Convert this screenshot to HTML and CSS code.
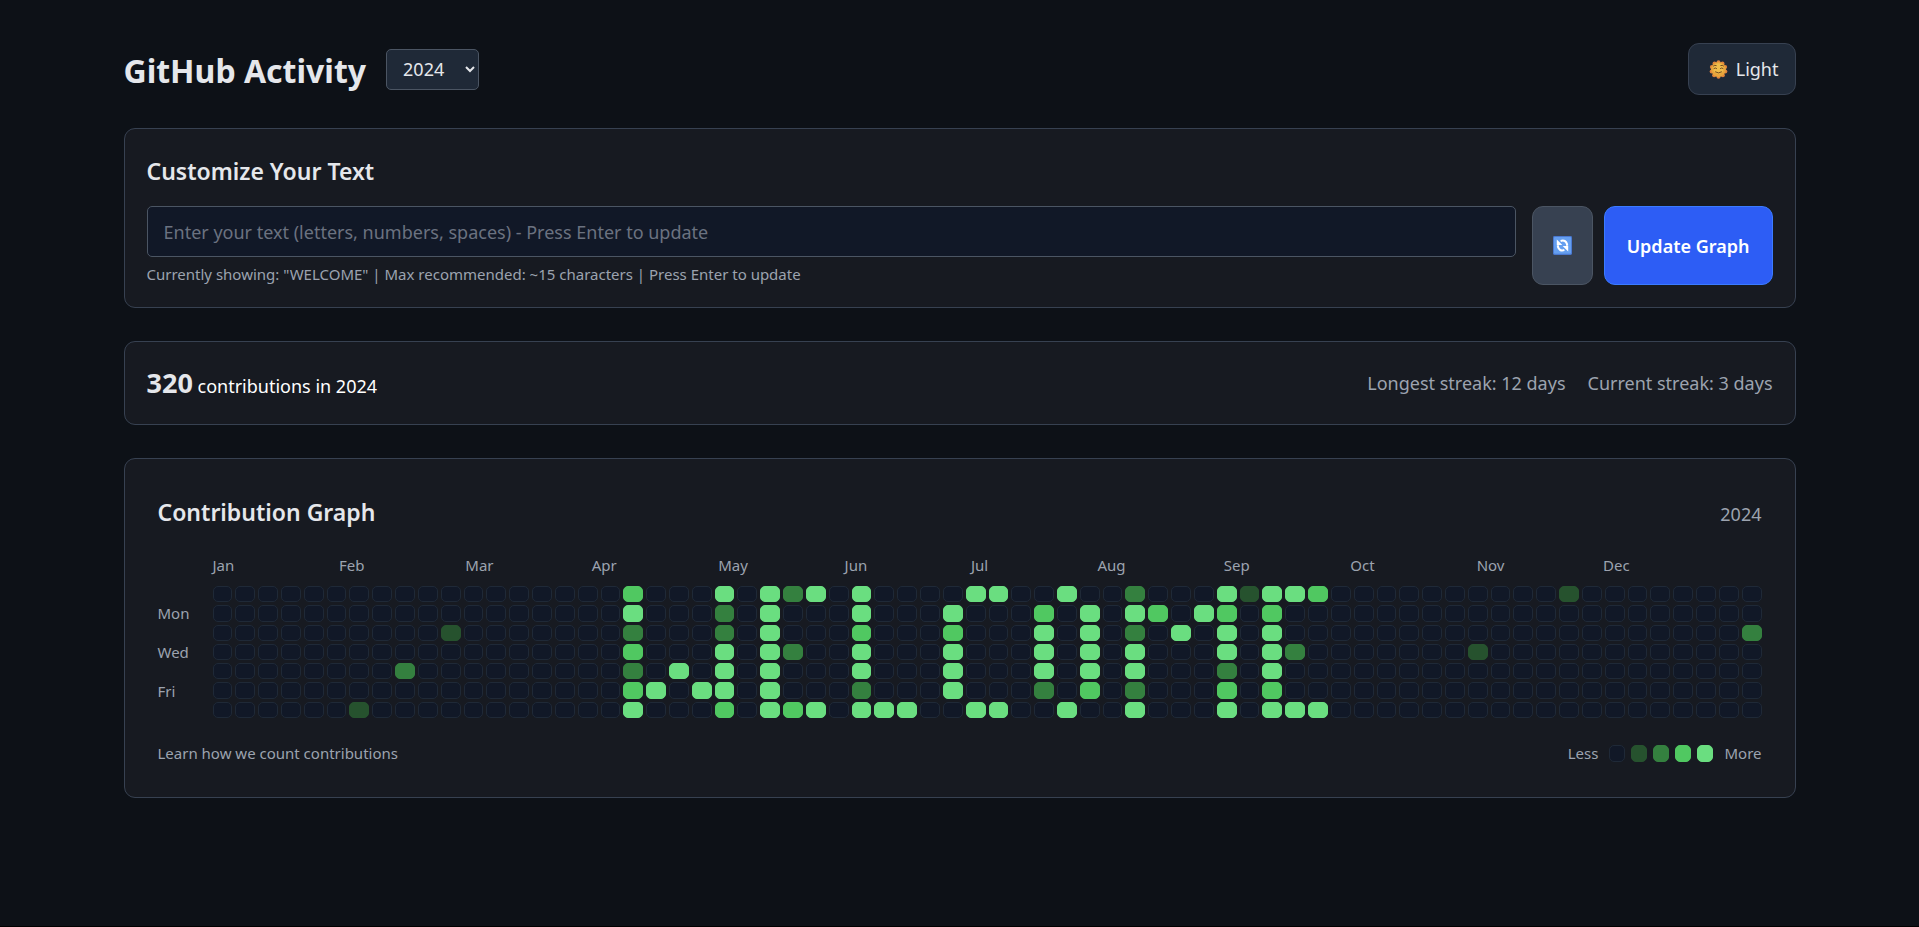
FILE: index.html
```html
<!DOCTYPE html>
<html lang="en">
<head>
<meta charset="utf-8">
<meta name="viewport" content="width=device-width, initial-scale=1">
<title>GitHub Activity</title>
<link rel="stylesheet" href="styles.css">
</head>
<body>
<main class="container">
  <header class="header">
    <div class="header-left">
      <h1 class="title">GitHub Activity</h1>
      <select class="year-select" aria-label="Year">
        <option>2024</option>
        <option>2023</option>
      </select>
    </div>
    <button class="btn theme-btn" type="button">
      <svg class="icon" viewBox="0 0 20 20" aria-hidden="true">
        <g fill="#e0833c">
          <circle cx="10" cy="2.4" r="2.1"/><circle cx="14.2" cy="3.7" r="2.1"/><circle cx="17" cy="7.3" r="2.1"/>
          <circle cx="17.2" cy="12" r="2.1"/><circle cx="14.6" cy="16" r="2.1"/><circle cx="10" cy="17.6" r="2.1"/>
          <circle cx="5.4" cy="16" r="2.1"/><circle cx="2.8" cy="12" r="2.1"/><circle cx="3" cy="7.3" r="2.1"/>
          <circle cx="5.8" cy="3.7" r="2.1"/>
        </g>
        <circle cx="10" cy="10" r="7.8" fill="#e9a53c"/>
        <circle cx="10" cy="9" r="5.6" fill="#f0bd4b"/>
        <g fill="none" stroke="#6b4420" stroke-width="1" stroke-linecap="round">
          <path d="M4.8 6.2q1.2-1 2.8-.4M12.4 5.8q1.6-.6 2.8.4"/>
          <path d="M5.2 8.9q1.4-1.3 2.8 0M12 8.9q1.4-1.3 2.8 0"/>
          <path d="M6.8 12.6q3.2 2.2 6.4 0"/>
        </g>
      </svg>
      <span>Light</span>
    </button>
  </header>

  <section class="card">
    <h2 class="card-title" id="customize">Customize Your Text</h2>
    <form class="form">
      <div class="field">
        <input class="text-input" type="text" aria-labelledby="customize" placeholder="Enter your text (letters, numbers, spaces) - Press Enter to update">
        <p class="hint">Currently showing: "WELCOME" | Max recommended: ~15 characters | Press Enter to update</p>
      </div>
      <div class="actions">
        <button class="btn refresh-btn" type="button" aria-label="Refresh">
          <svg class="icon" viewBox="0 0 20 20" aria-hidden="true">
            <rect width="20" height="20" rx="1.5" fill="#4a78cf"/>
            <rect x="1" y="1" width="18" height="17.6" rx="1" fill="#659ff0"/>
            <g fill="none" stroke="#fff" stroke-width="2.2">
              <path d="M8 5.2q5.4-1.6 6.8 3.4v1.6"/>
              <path d="M12 14.8q-5.4 1.6-6.8-3.4v-1.6"/>
            </g>
            <path d="M4 3.8v5.6h5.8zM16 16.2v-5.6h-5.8z" fill="#fff"/>
          </svg>
        </button>
        <button class="btn update-btn" type="button">Update Graph</button>
      </div>
    </form>
  </section>

  <section class="card stats">
    <p class="total"><strong class="total-count">320</strong> contributions in 2024</p>
    <div class="streaks">
      <span>Longest streak: 12 days</span>
      <span>Current streak: 3 days</span>
    </div>
  </section>

  <section class="card graph-card">
    <div class="graph-head">
      <h2 class="card-title">Contribution Graph</h2>
      <span class="graph-year">2024</span>
    </div>
    <div class="graph">
      <div class="months">
        <span>Jan</span><span>Feb</span><span>Mar</span><span>Apr</span><span>May</span><span>Jun</span>
        <span>Jul</span><span>Aug</span><span>Sep</span><span>Oct</span><span>Nov</span><span>Dec</span>
      </div>
      <div class="days">
        <span></span><span>Mon</span><span></span><span>Wed</span><span></span><span>Fri</span><span></span>
      </div>
      <div class="cells" id="cells"></div>
    </div>
    <footer class="graph-foot">
      <span>Learn how we count contributions</span>
      <div class="legend">
        <span>Less</span>
        <div class="swatches">
          <i class="cell"></i><i class="cell l1"></i><i class="cell l2"></i><i class="cell l3"></i><i class="cell l4"></i>
        </div>
        <span>More</span>
      </div>
    </footer>
  </section>
</main>
<script src="graph.js"></script>
</body>
</html>
```
FILE: styles.css
```css
* {
  box-sizing: border-box;
  margin: 0;
}

body {
  min-height: 100vh;
  background: #0d1117;
  border-bottom: 1px solid #000;
  color: #e5e7eb;
  font: 18px/26px "Segoe UI", "Noto Sans", sans-serif;
}

.container {
  max-width: 1672px;
  margin: 0 auto;
  padding: 43px 0;
  display: flex;
  flex-direction: column;
  gap: 33px;
}

.header,
.header-left {
  display: flex;
  align-items: center;
}

.header {
  justify-content: space-between;
}

.header-left {
  gap: 20px;
}

.title {
  padding-top: 3px;
  font-size: 32px;
  line-height: 44px;
  font-weight: 700;
}

.year-select {
  height: 41px;
  width: 93px;
  padding: 0 0 0 12px;
  border: 1px solid #4b5563;
  border-radius: 5px;
  background: #1f2937;
  color: #e5e7eb;
  font: inherit;
}

.btn {
  display: flex;
  align-items: center;
  justify-content: center;
  gap: 8px;
  border: 1px solid;
  border-radius: 11px;
  color: #e5e7eb;
  font: inherit;
}

.icon {
  width: 19px;
  height: 19px;
  flex: none;
}

.theme-btn {
  height: 52px;
  padding: 0 16px 0 20px;
  background: #1f2937;
  border-color: #374151;
}

.card {
  padding: 22px;
  border: 1px solid #374151;
  border-radius: 11px;
  background: #171a21;
}

.card-title {
  font-size: 23px;
  line-height: 40px;
  font-weight: 600;
}

.form {
  display: flex;
  gap: 16px;
  margin-top: 15px;
}

.field {
  flex: 1;
}

.text-input {
  display: block;
  width: 100%;
  height: 51px;
  padding: 0 16px;
  border: 1px solid #4b5563;
  border-radius: 5px;
  background: #111827;
  color: #e5e7eb;
  font: inherit;
}

.text-input::placeholder {
  color: #6b7280;
}

.hint {
  margin-top: 6px;
  font-size: 15px;
  line-height: 22px;
  color: #9ca3af;
}

.actions {
  display: flex;
  gap: 11px;
}

.refresh-btn {
  padding: 0 20px;
  background: #374151;
  border-color: #4b5563;
}

.update-btn {
  padding: 0 22px;
  background: #2d5df5;
  border-color: #3b7bff;
  color: #fff;
  font-weight: 600;
}

.stats {
  display: flex;
  align-items: center;
  justify-content: space-between;
}

.total {
  color: #fff;
}

.total-count {
  font-size: 27px;
  line-height: 38px;
  font-weight: 700;
  color: #e5e7eb;
}

.streaks {
  display: flex;
  gap: 22px;
  color: #9ca3af;
}

.graph-card {
  padding: 33px;
}

.graph-head {
  display: flex;
  align-items: baseline;
  justify-content: space-between;
  margin-bottom: 22px;
}

.graph-year {
  color: #9ca3af;
}

.graph {
  display: grid;
  grid-template-columns: 55px 1fr;
  grid-template-rows: 22px 132px;
  row-gap: 10px;
  font-size: 15px;
  line-height: 16px;
  color: #9ca3af;
}

.months {
  grid-column: 2;
  display: grid;
  grid-template-columns: repeat(12, 1fr);
  padding-right: 32px;
  line-height: 22px;
}

.days {
  display: grid;
  grid-template-rows: repeat(7, 1fr);
  gap: 3px;
  align-items: center;
}

.cells {
  display: grid;
  grid-auto-flow: column;
  grid-auto-columns: 1fr;
  grid-template-rows: repeat(7, 1fr);
  gap: 3px;
}

.cell {
  border: 1px solid #1f2937;
  border-radius: 5px;
  background: #111827;
}

.l1 { background: #26522e; border-color: #26522e; }
.l2 { background: #34803f; border-color: #34803f; }
.l3 { background: #50c861; border-color: #50c861; }
.l4 { background: #6ade80; border-color: #6ade80; }

.graph-foot {
  display: flex;
  justify-content: space-between;
  margin-top: 24px;
  font-size: 15px;
  line-height: 22px;
  color: #9ca3af;
}

.legend {
  display: flex;
  align-items: center;
  gap: 11px;
}

.swatches {
  display: flex;
  gap: 6px;
}

.swatches .cell {
  width: 16px;
  height: 17px;
}
```
FILE: graph.js
```js
// Activity level (0-4) of each day, Sunday to Saturday, keyed by week index.
const WEEKS = 68;
const levels = {
  6: "0000001", 8: "0000200", 10: "0010000",
  18: "3423234", 19: "0000040", 20: "0000400", 21: "0000040", 22: "4224443",
  24: "4444444", 25: "2002003", 26: "4000004",
  28: "4434424", 29: "0000004", 30: "0000004",
  32: "0434440", 33: "4000004", 34: "4000004",
  36: "0344420", 37: "4000004", 38: "0444430",
  40: "2424424", 41: "0300000", 42: "0040000", 43: "0400000", 44: "4344234",
  45: "1000000", 46: "4344434", 47: "4002004", 48: "3000004",
  55: "0001000", 59: "1000000", 67: "0020000"
};

const grid = document.getElementById("cells");
for (let week = 0; week < WEEKS; week++) {
  for (const level of levels[week] || "0000000") {
    const cell = document.createElement("div");
    cell.className = level === "0" ? "cell" : "cell l" + level;
    grid.appendChild(cell);
  }
}
```
